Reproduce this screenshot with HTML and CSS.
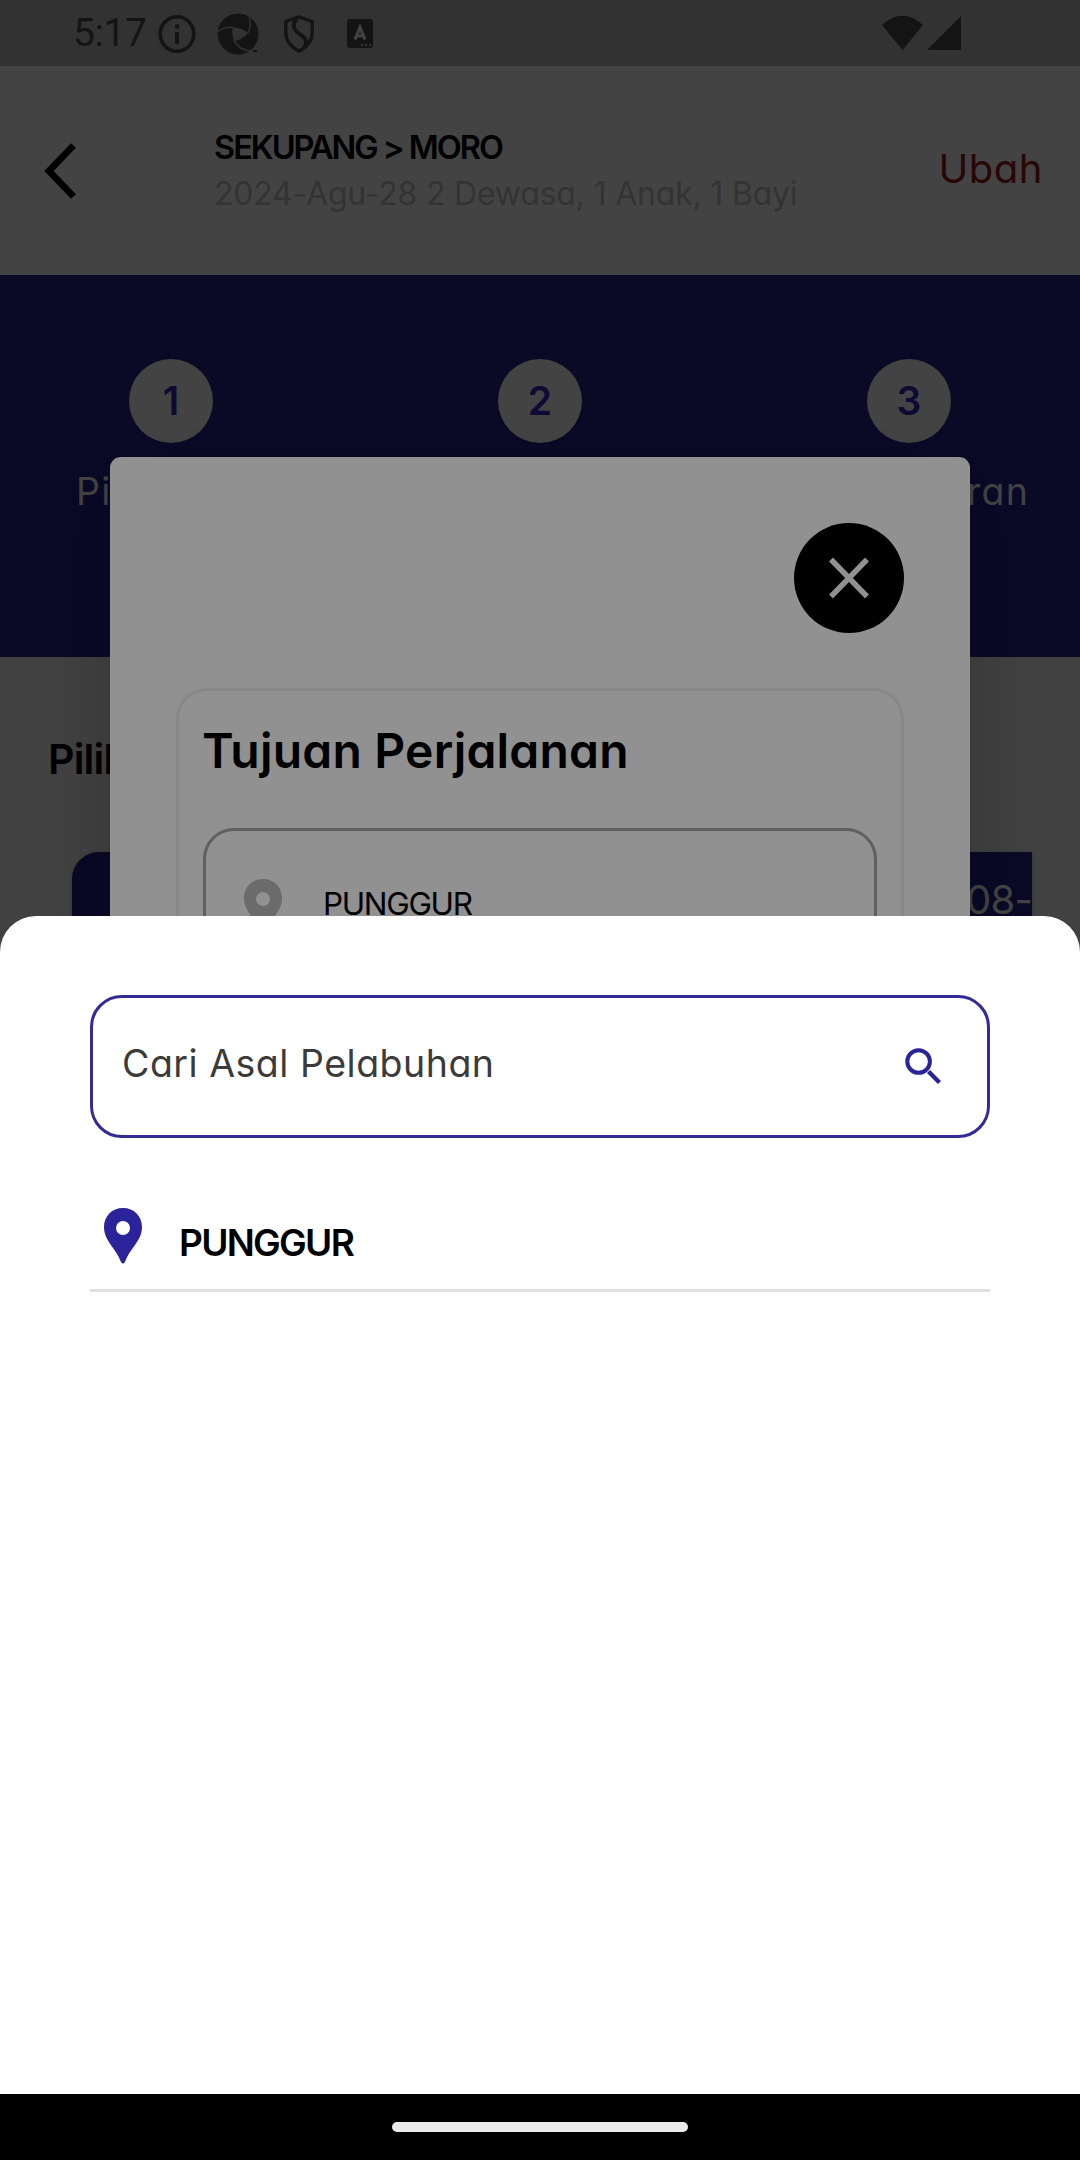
FILE: index.html
```html
<!DOCTYPE html>
<html lang="id">
<head>
<meta charset="utf-8">
<title>Cari Asal Pelabuhan</title>
<link rel="stylesheet" href="styles.css">
</head>
<body>
<div class="screen">
  <div class="status">
    <span class="clock">5:17</span>
    <svg class="ic-info" width="38" height="40" viewBox="0 0 38 40"><ellipse cx="19" cy="20" rx="16.8" ry="17.2" fill="none" stroke="#141414" stroke-width="3.6"/><path d="M17 10.5h4v4h-4zM17 18h4v12h-4z" fill="#141414"/></svg>
    <svg class="ic-lens" width="42" height="42" viewBox="0 0 42 42"><circle cx="21" cy="21" r="20.5" fill="#141414"/><path d="M15.500 14.500Q24 14 31 20Q25 27 17 28Q14.500 21 15.500 14.500z" fill="#323232"/><path d="M0 19Q8 13 16 14.500M31 20Q35 12 32 4M16.500 27Q23 38 34 38" fill="none" stroke="#323232" stroke-width="1.500"/><path d="M36 37h4v2h-4z" fill="#141414"/></svg>
    <svg class="ic-shield" width="30" height="38" viewBox="0 0 30 38"><path d="M15 1.8L28.2 6.5V18Q28 29 15 36.2Q2 29 1.8 18V6.5z" fill="none" stroke="#141414" stroke-width="3.4" stroke-linejoin="round"/><path d="M13 3.5Q7 11 12.500 16.500L19 21.500Q24.500 26 20.500 32" fill="none" stroke="#141414" stroke-width="3.800"/></svg>
    <svg class="ic-app" width="26" height="29" viewBox="0 0 26 29"><rect width="26" height="29" rx="3" fill="#141414"/><path d="M8 20.500L13 8.500L18 20.500M9.500 17h7" fill="none" stroke="#434343" stroke-width="3.200"/><path d="M14 25h2.300v2h-2.300zM18 25h2.300v2h-2.300zM22 25h2.300v2h-2.300z" fill="#323232"/></svg>
    <svg class="ic-net" width="80" height="36" viewBox="0 0 80 36"><path d="M0 10Q20.500 -8.500 41 10L20.500 35z" fill="#141414"/><path d="M45 35L79 1V35z" fill="#141414"/></svg>
  </div>
  <header class="header">
    <svg class="back" width="34" height="58" viewBox="0 0 34 58"><path d="M29.500 3.500L5 29L29.500 54.500" fill="none" stroke="#000" stroke-width="6.800"/></svg>
    <div class="trip">
      <div class="route">SEKUPANG &gt; MORO</div>
      <div class="detail">2024-Agu-28 2 Dewasa, 1 Anak, 1 Bayi</div>
    </div>
    <div class="change">Ubah</div>
  </header>
  <section class="steps">
    <div class="step first"><div class="num">1</div><div class="label">Pilih</div></div>
    <div class="step"><div class="num">2</div></div>
    <div class="step last"><div class="num">3</div><div class="label">Pembayaran</div></div>
  </section>
  <main class="content">
    <h2 class="heading">Pilih</h2>
    <div class="dates">2024-08-</div>
  </main>

  <div class="modal">
    <div class="close"><svg width="40" height="42" viewBox="0 0 40 42"><path d="M2 2.500L38 39.500M38 2.500L2 39.500" stroke="#919191" stroke-width="5.400"/></svg></div>
    <div class="card">
      <h1 class="card-title">Tujuan Perjalanan</h1>
      <div class="port">
        <svg width="38" height="56" viewBox="0 0 38 56"><path fill-rule="evenodd" fill="#6b6b6b" d="M19 0C8 0 0 8 0 19C0 33 12 40 17 54Q19 57 21 54C26 40 38 33 38 19C38 8 30 0 19 0zM19 13a7 7 0 1 0 0 14a7 7 0 1 0 0-14z"/></svg>
        <span>PUNGGUR</span>
      </div>
    </div>
  </div>

  <div class="sheet">
    <div class="search">
      <span>Cari Asal Pelabuhan</span>
      <svg width="36" height="36" viewBox="0 0 36 36"><circle cx="13.600" cy="13.500" r="11.300" fill="none" stroke="#2a2399" stroke-width="4"/><path d="M23.500 23.500L34.500 34.500" stroke="#2a2399" stroke-width="4.400"/></svg>
    </div>
    <div class="result">
      <svg width="38" height="56" viewBox="0 0 38 56"><path fill-rule="evenodd" fill="#2a2399" d="M19 0C8 0 0 8 0 19C0 33 12 40 17 54Q19 57 21 54C26 40 38 33 38 19C38 8 30 0 19 0zM19 13a7 7 0 1 0 0 14a7 7 0 1 0 0-14z"/></svg>
      <span>PUNGGUR</span>
    </div>
  </div>

  <nav class="navbar"><div class="handle"></div></nav>
</div>
</body>
</html>
```
FILE: styles.css
```css
* { box-sizing: border-box; margin: 0; padding: 0; }
body { background: #414141; }
svg { display: block; flex: none; }

.screen {
  position: relative;
  display: flex;
  flex-direction: column;
  width: 1080px;
  height: 2160px;
  overflow: hidden;
  font-family: Inter, "Open Sans", sans-serif;
  font-feature-settings: "cv11";
  white-space: nowrap;
}

.status {
  display: flex;
  align-items: center;
  height: 66px;
  padding-left: 73px;
  background: #323232;
}
.clock { width: 85px; font: 39px/66px Roboto, sans-serif; letter-spacing: -0.4px; color: #141414; }
.ic-info { margin-top: 1px; }
.ic-lens { margin-left: 21px; margin-top: 1px; }
.ic-shield { margin-left: 25px; margin-top: 1px; }
.ic-app { margin-left: 33px; }
.ic-net { margin-left: 509px; }

.header {
  display: flex;
  align-items: center;
  height: 209px;
  padding: 0 39px 0 44px;
  background: #434343;
}
.trip { flex: 1; margin: 1px 0 0 136px; }
.route { font-size: 32.5px; line-height: 46px; font-weight: 600; letter-spacing: -2px; color: #000; }
.detail { font-size: 32px; line-height: 46px; letter-spacing: -0.2px; color: #333; }
.change { font-size: 40px; line-height: 50px; letter-spacing: 0.5px; margin-right: -2px; margin-top: -3px; color: #290606; }

.steps {
  display: flex;
  justify-content: space-between;
  height: 382px;
  padding: 84px 51px 0;
  background: #0a0926;
}
.step { display: flex; flex-direction: column; align-items: center; gap: 24px; width: 240px; }
.num {
  width: 84px;
  height: 84px;
  border-radius: 50%;
  background: #434343;
  color: #0d0b33;
  font-size: 39px;
  line-height: 84px;
  font-weight: 600;
  text-align: center;
}
.label { width: 100%; font-size: 37.5px; line-height: 50px; letter-spacing: 1.2px; color: #434343; }
.first .label { padding-left: 25px; }
.last .label { text-align: right; }

.content { flex: 1; padding: 72px 48px 0; background: #414141; }
.heading { font-size: 41px; line-height: 60px; font-weight: 600; letter-spacing: -0.8px; color: #000; }
.dates {
  height: 140px;
  margin: 63px 0 0 24px;
  padding: 18px 0 0;
  border-radius: 27px 0 0 27px;
  background: #0a0926;
  box-shadow: 0 1px 3px rgba(0, 0, 0, .3);
  color: #434343;
  font-size: 40px;
  line-height: 60px;
  letter-spacing: -0.8px;
  text-align: right;
}

.modal {
  position: absolute;
  left: 110px;
  top: 457px;
  width: 860px;
  height: 520px;
  padding: 66px;
  border-radius: 11px;
  background: #919191;
  box-shadow: 0 30px 60px rgba(0, 0, 0, .2);
}
.close {
  display: flex;
  align-items: center;
  justify-content: center;
  width: 110px;
  height: 110px;
  margin-left: auto;
  border-radius: 50%;
  background: #000;
}
.card {
  height: 320px;
  margin-top: 55px;
  padding: 30px 24px 0;
  border: 3px solid #888;
  border-radius: 31px;
}
.card-title { margin-left: -1px; font-size: 48px; line-height: 60px; font-weight: 600; letter-spacing: 0.2px; color: #000; }
.port {
  display: flex;
  gap: 41px;
  height: 142px;
  margin-top: 47px;
  padding: 48px 38px 0;
  border: 3px solid #606060;
  border-radius: 31px;
  color: #000;
  font-size: 31.5px;
  line-height: 49px;
  letter-spacing: -1.35px;
}

.sheet {
  position: absolute;
  left: 0;
  top: 916px;
  width: 1080px;
  height: 1178px;
  padding: 78.5px 90px 0;
  border-radius: 36px 36px 0 0;
  background: #fff;
}
.search {
  display: flex;
  align-items: center;
  justify-content: space-between;
  height: 143px;
  padding: 0 46px 0 29px;
  border: 3px solid #332c94;
  border-radius: 32px;
  color: #3b3b3b;
  font-size: 37.5px;
  line-height: 50px;
  letter-spacing: 0.5px;
}
.search span { margin-top: -4px; }
.search svg { margin-top: -1px; }
.result {
  display: flex;
  height: 154.5px;
  padding: 71px 14px 0;
  border-bottom: 3px solid #e0e0e0;
  color: #000;
  font-size: 37px;
  line-height: 50px;
  font-weight: 600;
  letter-spacing: -1.7px;
}
.result svg { margin-top: -1px; }
.result span { margin: 9px 0 0 37px; }

.navbar {
  display: flex;
  align-items: center;
  justify-content: center;
  height: 66px;
  background: #000;
}
.handle { width: 296px; height: 10px; border-radius: 5px; background: #ebebeb; }
```
